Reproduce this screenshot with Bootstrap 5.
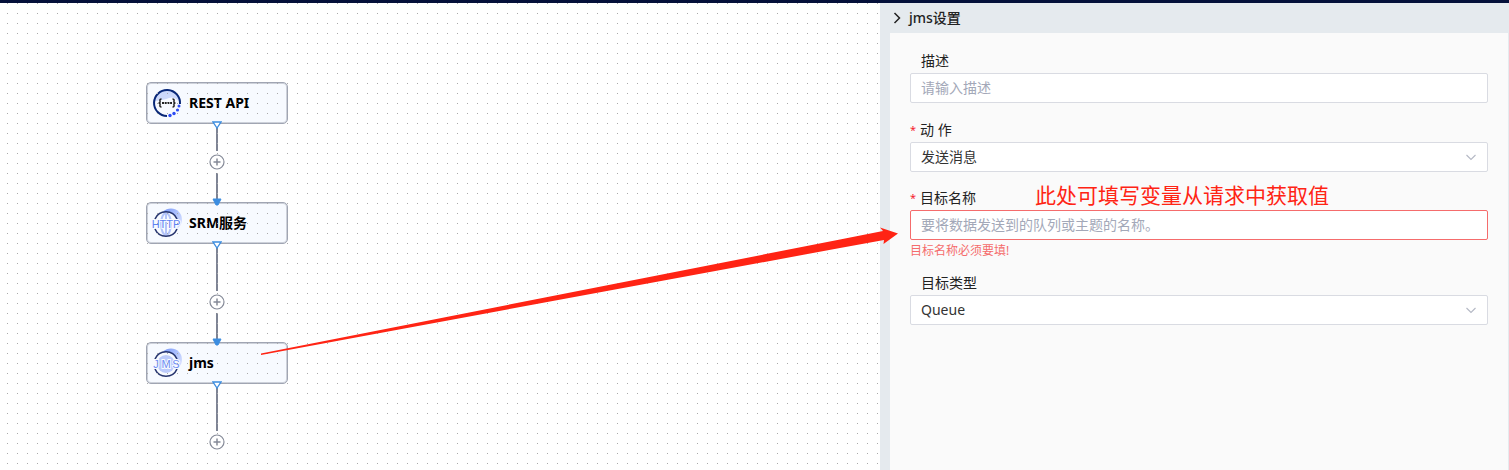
<!DOCTYPE html>
<html lang="zh-CN">
<head>
<meta charset="utf-8">
<meta name="viewport" content="width=device-width, initial-scale=1">
<title>jms设置</title>
<link href="https://cdn.jsdelivr.net/npm/bootstrap@5.3.0/dist/css/bootstrap.min.css" rel="stylesheet">
<style>
body{font-family:"Noto Sans","Noto Sans CJK SC",sans-serif;font-size:14px;line-height:20px;color:#222;border-top:3px solid #04103a}
.flow-shell{min-height:calc(100vh - 3px)}
.flow-canvas{min-width:0;padding:79px 0 0 146px;overflow:hidden;background:#fff}
.flow-canvas::after{content:"";position:absolute;inset:0;pointer-events:none;background:conic-gradient(from 270deg at 1px 1px,#a9a9a9 90deg,transparent 0) 7px 0/10px 10px}
.flow-chain{width:142px}
.flow-node{width:142px;height:42px;padding:0 5px;gap:7px;border:1px solid #a0a5b3;box-shadow:inset 0 0 0 1px #cdd1da;border-radius:5px;background:#f7faff;font-weight:700;color:#000}
.flow-node svg{flex:none;font-weight:400}
.flow-link{height:78px}
.flow-link.tall{height:98px}
.flow-link.tail{height:69px}
.flow-line{width:2px;background:#7e8494}
.flow-line.last-run{height:26px}
.flow-port{display:block;margin:-3px 0 -1px;z-index:1}
.flow-arrow{display:block;margin:-1px 0 -4px;z-index:1}
.flow-add{height:22px;width:22px;line-height:0}
.config-panel{width:629px;background:#e5eaee;padding:0 1px 0 10px}
.panel-head{height:30px;padding-left:3px;gap:8px;font-weight:500}
.panel-body{background:#fafafa;padding:18px 20px 0}
.panel-body label{display:block;padding-left:11px;height:22px;line-height:20px}
.panel-body label.req{padding-left:0}
.field-plain{margin-bottom:17px}
.field-checked{margin-bottom:13px}
.req::before{content:"*";color:#f5222d;margin-right:4px;font-size:11px;vertical-align:1px}
.panel-body .form-control,.panel-body .form-select{height:30px;padding:0 10px;font-size:14px;line-height:20px;border:1px solid #d9dbe2;border-radius:2px;color:#333;background-color:#fff}
.panel-body .form-control{padding-bottom:2px}
.panel-body .form-select{background-image:url("data:image/svg+xml,%3Csvg xmlns='http://www.w3.org/2000/svg' viewBox='0 0 12 12'%3E%3Cpath d='M1.5 4 6 8.500l4.500-4.500' fill='none' stroke='%23b4b8c4' stroke-width='1.100'/%3E%3C/svg%3E");background-size:12px;background-position:right 10px center}
.panel-body .form-control::placeholder{color:#a3a8b8;opacity:1}
.panel-body .form-control.bad{border-color:#f56c6c}
.field-error{font-size:12px;line-height:22px;height:20px;color:#f56c6c}
.hint-note{left:125px;top:-9px;font-size:21px;line-height:32px;color:#ff2414;white-space:nowrap}
.hint-arrow{left:260px;top:220px;pointer-events:none;z-index:5}
</style>
</head>
<body>
<main class="flow-shell d-flex position-relative overflow-hidden">
<section class="flow-canvas flex-fill position-relative">
<div class="flow-chain d-flex flex-column align-items-center">
<div class="flow-node d-flex align-items-center">
<svg width="30" height="30" viewBox="0 0 30 30"><circle cx="15" cy="15" r="13" fill="#f8faff"/><path d="M3 13a12 12 0 0 1 24 0Q22 8 17 10T3 13z" fill="#cdd9fb"/><path d="M28 16A13 13 0 1 0 15 28" fill="none" stroke="#082777" stroke-width="2"/><g fill="#2c4bf4"><circle cx="27" cy="18" r="1.500"/><circle cx="25.500" cy="22" r="1.600"/><circle cx="22" cy="25.500" r="1.700"/><circle cx="18" cy="27.500" r="1.700"/></g><path d="M9.500 11q-2 0-1.500 2t-1.500 2q2 0 1.500 2t1.500 2M20.500 11q2 0 1.500 2t1.500 2q-2 0-1.500 2t-1.500 2" fill="none" stroke="#222" stroke-width="1.500"/><path d="M10 15h10" stroke="#222" stroke-width="2" stroke-dasharray="2 .7"/></svg>
<span>REST API</span></div>
<div class="flow-link d-flex flex-column align-items-center">
<svg class="flow-port" width="10" height="8" viewBox="0 0 10 8"><path d="M1 1h8L5 7z" fill="#fff" stroke="#3c8de0" stroke-width="1.300"/></svg>
<span class="flow-line flex-fill"></span>
<button class="flow-add btn p-0 border-0" type="button" aria-label="添加节点"><svg width="16" height="16" viewBox="0 0 16 16" fill="none" stroke="#858a98"><circle cx="8" cy="8" r="7" stroke-width="1.200"/><path d="M8 4.500v7M4.500 8h7" stroke-width="1.500"/></svg></button>
<span class="flow-line last-run"></span>
<svg class="flow-arrow" width="10" height="8" viewBox="0 0 10 8"><path d="M1 1h8L6 7H4z" fill="#3c8de0" stroke="#3c8de0"/></svg>
</div>
<div class="flow-node d-flex align-items-center">
<svg width="30" height="30" viewBox="0 0 30 30"><defs><linearGradient id="moon" x1="0" y1="0" x2="1" y2=".6"><stop offset=".2" stop-color="#7f9dfa"/><stop offset="1" stop-color="#d3deff"/></linearGradient></defs><circle cx="19" cy="11.500" r="11" fill="url(#moon)"/><circle cx="14" cy="16" r="12" fill="#f7faff"/><g fill="none" stroke="#b3c4fa" stroke-width="2"><ellipse cx="14" cy="16" rx="5" ry="11"/><path d="M14 5v22"/></g><path d="M3 11a12 12 0 0 1 22 0M3 21a12 12 0 0 0 22 0" fill="none" stroke="#26346e" stroke-width="1.600"/><text x="14" y="20" text-anchor="middle" font-family="Liberation Sans" font-size="11" fill="#5f82f2" stroke="#f7faff" stroke-width="2" paint-order="stroke">HTTP</text></svg>
<span>SRM服务</span></div>
<div class="flow-link tall d-flex flex-column align-items-center">
<svg class="flow-port" width="10" height="8" viewBox="0 0 10 8"><path d="M1 1h8L5 7z" fill="#fff" stroke="#3c8de0" stroke-width="1.300"/></svg>
<span class="flow-line flex-fill"></span>
<button class="flow-add btn p-0 border-0" type="button" aria-label="添加节点"><svg width="16" height="16" viewBox="0 0 16 16" fill="none" stroke="#858a98"><circle cx="8" cy="8" r="7" stroke-width="1.200"/><path d="M8 4.500v7M4.500 8h7" stroke-width="1.500"/></svg></button>
<span class="flow-line last-run"></span>
<svg class="flow-arrow" width="10" height="8" viewBox="0 0 10 8"><path d="M1 1h8L6 7H4z" fill="#3c8de0" stroke="#3c8de0"/></svg>
</div>
<div class="flow-node d-flex align-items-center">
<svg width="30" height="30" viewBox="0 0 30 30"><circle cx="19" cy="11.500" r="11" fill="url(#moon)"/><circle cx="14" cy="16" r="12" fill="#f7faff"/><circle cx="14" cy="16" r="9" fill="#bccbfb"/><path d="M3 11a12 12 0 0 1 22 0M3 21a12 12 0 0 0 22 0" fill="none" stroke="#26346e" stroke-width="1.600"/><text y="20" text-anchor="middle" font-family="Liberation Sans" font-size="11" fill="#6f8ef4" stroke="#f7faff" stroke-width="2" paint-order="stroke"><tspan x="4">J</tspan><tspan x="14">M</tspan><tspan x="24">S</tspan></text></svg>
<span>jms</span></div>
<div class="flow-link tail d-flex flex-column align-items-center">
<svg class="flow-port" width="10" height="8" viewBox="0 0 10 8"><path d="M1 1h8L5 7z" fill="#fff" stroke="#3c8de0" stroke-width="1.300"/></svg>
<span class="flow-line flex-fill"></span>
<button class="flow-add btn p-0 border-0" type="button" aria-label="添加节点"><svg width="16" height="16" viewBox="0 0 16 16" fill="none" stroke="#858a98"><circle cx="8" cy="8" r="7" stroke-width="1.200"/><path d="M8 4.500v7M4.500 8h7" stroke-width="1.500"/></svg></button>
</div>
</div>
</section>
<aside class="config-panel d-flex flex-column flex-shrink-0">
<header class="panel-head d-flex align-items-center"><svg width="8" height="12" viewBox="0 0 8 12"><path d="m1.500 1 5 5-5 5" fill="none" stroke="#222" stroke-width="1.500"/></svg><span>jms设置</span></header>
<form class="panel-body flex-fill">
<div class="field-plain"><label for="desc">描述</label><input class="form-control" id="desc" placeholder="请输入描述"></div>
<div class="mb-3"><label class="req" for="action">动 作</label><select class="form-select" id="action"><option>发送消息</option></select></div>
<div class="field-checked position-relative"><label class="req" for="target">目标名称</label><span class="hint-note position-absolute">此处可填写变量从请求中获取值</span><input class="form-control bad" id="target" placeholder="要将数据发送到的队列或主题的名称。" aria-describedby="target-error"><div class="field-error" id="target-error">目标名称必须要填!</div></div>
<div><label for="kind">目标类型</label><select class="form-select" id="kind"><option>Queue</option></select></div>
</form>
</aside>
<svg class="hint-arrow position-absolute" width="640" height="140" viewBox="0 0 640 140" aria-hidden="true"><path d="M1 130.500 580 16.500 623 8 620 4.500 638 10.500 623.500 21 624 17 580 25 1 132z" fill="#ff2414"/></svg>
</main>
<script src="https://cdn.jsdelivr.net/npm/bootstrap@5.3.0/dist/js/bootstrap.bundle.min.js"></script>
</body>
</html>
